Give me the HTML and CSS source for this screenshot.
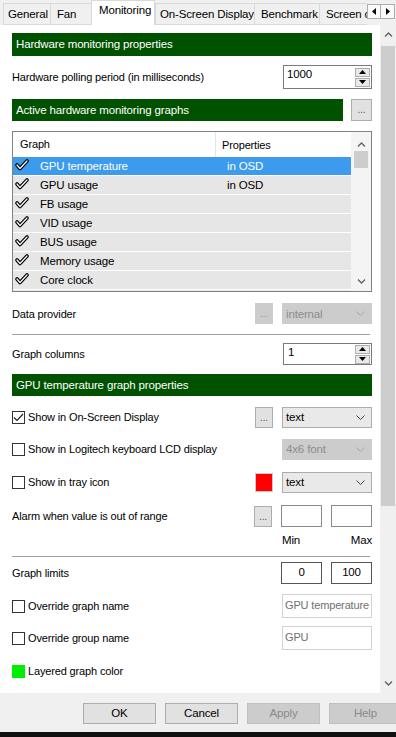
FILE: index.html
```html
<!DOCTYPE html>
<html>
<head>
<meta charset="utf-8">
<link rel="stylesheet" href="styles.css">
</head>
<body>
<div class="tabbar">
  <div class="tablist">
    <div class="tab t-general">General</div>
    <div class="tab t-fan">Fan</div>
    <div class="tab sel t-mon">Monitoring</div>
    <div class="tab t-osd">On-Screen Display</div>
    <div class="tab t-bench">Benchmark</div>
    <div class="tab t-screen">Screen capture</div>
  </div>
  <div class="tabarrows">
    <div class="tarrow"><svg width="5" height="7" viewBox="0 0 5 7"><path d="M4 0 L0 3.5 L4 7Z" fill="#000"/></svg></div>
    <div class="tarrow"><svg width="5" height="7" viewBox="0 0 5 7"><path d="M1 0 L5 3.5 L1 7Z" fill="#000"/></svg></div>
  </div>
</div>

<div class="main">
  <div class="panel">
    <div class="content">
      <div class="gbar g1">Hardware monitoring properties</div>

      <div class="row r-poll">
        <span>Hardware polling period (in milliseconds)</span>
        <div class="spin h24">
          <div class="spin-val">1000</div>
          <div class="spin-btns">
            <div class="sb"><svg width="7" height="4" viewBox="0 0 7 4"><path d="M0 4 L3.5 0 L7 4Z" fill="#000"/></svg></div>
            <div class="sb"><svg width="7" height="4" viewBox="0 0 7 4"><path d="M0 0 L3.5 4 L7 0Z" fill="#000"/></svg></div>
          </div>
        </div>
      </div>

      <div class="row r-active">
        <div class="gbar g2">Active hardware monitoring graphs</div>
        <div class="dots">...</div>
      </div>

      <div class="list">
        <div class="lv">
          <div class="lv-head">
            <div class="c1">Graph</div>
            <div class="c2">Properties</div>
          </div>
          <div class="lv-row selrow"><span class="chk"><svg width="14" height="12" viewBox="0 0 14 12"><path d="M2 6 L5 9.5 L12 2" fill="none" stroke="#000" stroke-width="3.6" stroke-linecap="round" stroke-linejoin="round"/><path d="M2 6 L5 9.5 L12 2" fill="none" stroke="#fff" stroke-width="1.2" stroke-linecap="round" stroke-linejoin="round"/></svg></span><span class="n">GPU temperature</span><span class="p">in OSD</span></div>
          <div class="lv-row"><span class="chk"><svg width="14" height="12" viewBox="0 0 14 12"><path d="M2 6 L5 9.5 L12 2" fill="none" stroke="#000" stroke-width="3.6" stroke-linecap="round" stroke-linejoin="round"/><path d="M2 6 L5 9.5 L12 2" fill="none" stroke="#fff" stroke-width="1.2" stroke-linecap="round" stroke-linejoin="round"/></svg></span><span class="n">GPU usage</span><span class="p">in OSD</span></div>
          <div class="lv-row"><span class="chk"><svg width="14" height="12" viewBox="0 0 14 12"><path d="M2 6 L5 9.5 L12 2" fill="none" stroke="#000" stroke-width="3.6" stroke-linecap="round" stroke-linejoin="round"/><path d="M2 6 L5 9.5 L12 2" fill="none" stroke="#fff" stroke-width="1.2" stroke-linecap="round" stroke-linejoin="round"/></svg></span><span class="n">FB usage</span><span class="p"></span></div>
          <div class="lv-row"><span class="chk"><svg width="14" height="12" viewBox="0 0 14 12"><path d="M2 6 L5 9.5 L12 2" fill="none" stroke="#000" stroke-width="3.6" stroke-linecap="round" stroke-linejoin="round"/><path d="M2 6 L5 9.5 L12 2" fill="none" stroke="#fff" stroke-width="1.2" stroke-linecap="round" stroke-linejoin="round"/></svg></span><span class="n">VID usage</span><span class="p"></span></div>
          <div class="lv-row"><span class="chk"><svg width="14" height="12" viewBox="0 0 14 12"><path d="M2 6 L5 9.5 L12 2" fill="none" stroke="#000" stroke-width="3.6" stroke-linecap="round" stroke-linejoin="round"/><path d="M2 6 L5 9.5 L12 2" fill="none" stroke="#fff" stroke-width="1.2" stroke-linecap="round" stroke-linejoin="round"/></svg></span><span class="n">BUS usage</span><span class="p"></span></div>
          <div class="lv-row"><span class="chk"><svg width="14" height="12" viewBox="0 0 14 12"><path d="M2 6 L5 9.5 L12 2" fill="none" stroke="#000" stroke-width="3.6" stroke-linecap="round" stroke-linejoin="round"/><path d="M2 6 L5 9.5 L12 2" fill="none" stroke="#fff" stroke-width="1.2" stroke-linecap="round" stroke-linejoin="round"/></svg></span><span class="n">Memory usage</span><span class="p"></span></div>
          <div class="lv-row"><span class="chk"><svg width="14" height="12" viewBox="0 0 14 12"><path d="M2 6 L5 9.5 L12 2" fill="none" stroke="#000" stroke-width="3.6" stroke-linecap="round" stroke-linejoin="round"/><path d="M2 6 L5 9.5 L12 2" fill="none" stroke="#fff" stroke-width="1.2" stroke-linecap="round" stroke-linejoin="round"/></svg></span><span class="n">Core clock</span><span class="p"></span></div>
          <div class="lv-row"><span class="chk"><svg width="14" height="12" viewBox="0 0 14 12"><path d="M2 6 L5 9.5 L12 2" fill="none" stroke="#000" stroke-width="3.6" stroke-linecap="round" stroke-linejoin="round"/><path d="M2 6 L5 9.5 L12 2" fill="none" stroke="#fff" stroke-width="1.2" stroke-linecap="round" stroke-linejoin="round"/></svg></span><span class="n"></span><span class="p"></span></div>
        </div>
        <div class="lv-scroll">
          <svg class="chev" width="9" height="5" viewBox="0 0 9 5"><path d="M1 4.5 L4.5 1 L8 4.5" fill="none" stroke="#606060" stroke-width="1.3"/></svg>
          <div class="lv-thumb"></div>
          <div class="fill"></div>
          <svg class="chev" width="9" height="5" viewBox="0 0 9 5"><path d="M1 0.5 L4.5 4 L8 0.5" fill="none" stroke="#606060" stroke-width="1.3"/></svg>
        </div>
      </div>

      <div class="row r-provider">
        <span>Data provider</span>
        <div class="ctrls">
          <div class="dots dis">...</div>
          <div class="combo dis"><span>internal</span><svg width="9" height="5" viewBox="0 0 9 5"><path d="M0.5 0.5 L4.5 4.5 L8.5 0.5" fill="none" stroke="#a8a8a8" stroke-width="1"/></svg></div>
        </div>
      </div>

      <div class="sep s1"></div>

      <div class="row r-cols">
        <span>Graph columns</span>
        <div class="spin h22">
          <div class="spin-val v1">1</div>
          <div class="spin-btns">
            <div class="sb"><svg width="7" height="4" viewBox="0 0 7 4"><path d="M0 4 L3.5 0 L7 4Z" fill="#000"/></svg></div>
            <div class="sb"><svg width="7" height="4" viewBox="0 0 7 4"><path d="M0 0 L3.5 4 L7 0Z" fill="#000"/></svg></div>
          </div>
        </div>
      </div>

      <div class="gbar g3">GPU temperature graph properties</div>

      <div class="row r-osd">
        <label class="cb"><span class="box on"><svg width="11" height="9" viewBox="0 0 11 9"><path d="M1 4.5 L4 7.5 L10 1" fill="none" stroke="#222" stroke-width="1.2"/></svg></span>Show in On-Screen Display</label>
        <div class="ctrls">
          <div class="dots">...</div>
          <div class="combo"><span>text</span><svg width="9" height="5" viewBox="0 0 9 5"><path d="M0.5 0.5 L4.5 4.5 L8.5 0.5" fill="none" stroke="#444" stroke-width="1"/></svg></div>
        </div>
      </div>

      <div class="row r-lcd">
        <label class="cb"><span class="box"></span>Show in Logitech keyboard LCD display</label>
        <div class="ctrls">
          <div class="combo dis"><span>4x6 font</span><svg width="9" height="5" viewBox="0 0 9 5"><path d="M0.5 0.5 L4.5 4.5 L8.5 0.5" fill="none" stroke="#a8a8a8" stroke-width="1"/></svg></div>
        </div>
      </div>

      <div class="row r-tray">
        <label class="cb"><span class="box"></span>Show in tray icon</label>
        <div class="ctrls">
          <div class="swatch red"></div>
          <div class="combo"><span>text</span><svg width="9" height="5" viewBox="0 0 9 5"><path d="M0.5 0.5 L4.5 4.5 L8.5 0.5" fill="none" stroke="#444" stroke-width="1"/></svg></div>
        </div>
      </div>

      <div class="row r-alarm">
        <span>Alarm when value is out of range</span>
        <div class="ctrls">
          <div class="dots">...</div>
          <div class="pair">
            <div class="tbox"></div>
            <div class="tbox"></div>
          </div>
        </div>
      </div>
      <div class="minmax"><span>Min</span><span>Max</span></div>

      <div class="sep s2"></div>

      <div class="row r-limits">
        <span>Graph limits</span>
        <div class="pair">
          <div class="tbox dark">0</div>
          <div class="tbox dark">100</div>
        </div>
      </div>

      <div class="row r-gname">
        <label class="cb"><span class="box"></span>Override graph name</label>
        <div class="dinput">GPU temperature</div>
      </div>

      <div class="row r-grp">
        <label class="cb"><span class="box"></span>Override group name</label>
        <div class="dinput">GPU</div>
      </div>

      <div class="row r-layer">
        <label class="cb"><span class="swatch green"></span>Layered graph color</label>
      </div>

      <div class="row r-next">
        <div class="dinput"></div>
      </div>
    </div>
  </div>
  <div class="vscroll">
    <svg class="chev" width="9" height="5" viewBox="0 0 9 5"><path d="M1 4.5 L4.5 1 L8 4.5" fill="none" stroke="#606060" stroke-width="1.3"/></svg>
    <div class="thumb"></div>
    <div class="fill"></div>
    <svg class="chev" width="9" height="5" viewBox="0 0 9 5"><path d="M1 0.5 L4.5 4 L8 0.5" fill="none" stroke="#606060" stroke-width="1.3"/></svg>
  </div>
</div>

<div class="footer">
  <div class="btn">OK</div>
  <div class="btn">Cancel</div>
  <div class="btn dis">Apply</div>
  <div class="btn dis">Help</div>
</div>
<div class="taskbar"></div>
</body>
</html>
```

FILE: styles.css
```css
* { box-sizing: border-box; }
html, body { margin: 0; padding: 0; }
body {
  width: 396px;
  height: 737px;
  overflow: hidden;
  background: #f0f0f0;
  font-family: "Liberation Sans", Arial, sans-serif;
  font-size: 11px;
  letter-spacing: -0.15px;
  color: #000;
}

/* tabs */
.tabbar {
  height: 25px;
  display: flex;
  align-items: flex-start;
}
.tablist {
  width: 367px;
  height: 25px;
  display: flex;
  align-items: flex-end;
  overflow: hidden;
  padding-left: 3px;
  flex: none;
}
.tab {
  flex: none;
  height: 22px;
  border: 1px solid #d9d9d9;
  border-right: none;
  background: #f0f0f0;
  padding: 4px 0 0 4px;
  white-space: nowrap;
  font-size: 11.5px;
}
.tab.sel {
  height: 25px;
  background: #fff;
  border: 1px solid #d9d9d9;
  border-bottom: none;
  padding-top: 3px;
  padding-left: 7px;
}
.t-general { width: 47px; }
.t-fan { width: 41px; padding-left: 6px; }
.t-mon { width: 64px; }
.t-osd { width: 99px; }
.t-bench { width: 65px; padding-left: 6px; }
.t-screen { width: 90px; padding-left: 6px; }
.tabarrows {
  display: flex;
  margin-top: 4px;
}
.tarrow {
  width: 14px;
  height: 15px;
  border: 1px solid #adadad;
  background: #fafafa;
  display: flex;
  align-items: center;
  justify-content: center;
}
.tarrow + .tarrow { border-left: none; }

/* main */
.main {
  height: 668px;
  display: flex;
}
.panel {
  width: 380px;
  background: #fff;
  overflow: hidden;
}
.content {
  padding: 8px 8px 0 12px;
}
.vscroll {
  width: 16px;
  background: #f0f0f0;
  display: flex;
  flex-direction: column;
  align-items: center;
  padding-top: 7px;
}
.vscroll .thumb {
  margin-top: 9px;
  width: 14px;
  height: 460px;
  background: #cdcdcd;
}
.vscroll .fill { flex: 1; }
.vscroll .chev:last-child { margin-bottom: 7px; }

.gbar {
  background: #005200;
  color: #fff;
  height: 23px;
  line-height: 22px;
  padding-left: 4px;
  font-size: 11.5px;
}
.g3 { margin-top: 9px; height: 22px; }

.row {
  display: flex;
  align-items: center;
  justify-content: space-between;
}
.ctrls {
  display: flex;
  align-items: center;
  gap: 9px;
  margin-left: auto;
}

.r-poll { margin-top: 9px; height: 24px; }
.r-active { margin-top: 10px; height: 22px; }
.r-active .gbar { width: 331px; height: 22px; }

.dots {
  width: 18px;
  height: 21px;
  border: 1px solid #adadad;
  background: #e1e1e1;
  color: #555;
  font-size: 10px;
  text-align: center;
  line-height: 20px;
}
.r-active .dots { width: 21px; height: 22px; }
.dots.dis { background: #cccccc; border-color: #cccccc; color: #999; }

.spin {
  width: 89px;
  border: 1px solid #7a7a7a;
  background: #fff;
  display: flex;
  justify-content: space-between;
}
.spin.h24 { height: 24px; }
.spin.h22 { height: 22px; }
.spin-val { padding: 2px 0 0 3px; font-size: 11.5px; }
.spin-val.v1 { padding-left: 4px; }
.spin-btns {
  display: flex;
  flex-direction: column;
  justify-content: center;
  gap: 1px;
  padding-right: 1px;
}
.sb {
  width: 15px;
  height: 9px;
  border: 1px solid #adadad;
  background: #e9e9e9;
  display: flex;
  align-items: center;
  justify-content: center;
}

/* list */
.list {
  margin-top: 10px;
  height: 161px;
  border: 1px solid #828282;
  display: flex;
  background: #fff;
}
.lv {
  flex: 1;
  overflow: hidden;
}
.lv-head {
  height: 25px;
  display: flex;
  align-items: center;
}
.lv-head .c1 {
  width: 203px;
  padding-left: 7px;
  border-right: 1px solid #e5e5e5;
  height: 25px;
  line-height: 25px;
}
.lv-head .c2 { padding-left: 6px; }
.lv-row {
  height: 19px;
  background: #e6e6e6;
  border-bottom: 1px solid #fff;
  display: flex;
  align-items: center;
  font-size: 11.5px;
}
.lv-row.selrow { background: #3c9bec; color: #fff; }
.lv-row .chk { width: 14px; margin-left: 2px; display: flex; margin-top: -3px; }
.lv-row .n { width: 198px; padding-left: 11px; }
.lv-row .p { padding-left: 0; }
.lv-scroll {
  width: 20px;
  flex: none;
  background: #f4f4f4;
  display: flex;
  flex-direction: column;
  align-items: center;
  padding-top: 10px;
}
.lv-thumb {
  margin-top: 4px;
  width: 14px;
  height: 17px;
  background: #cdcdcd;
}
.lv-scroll .fill { flex: 1; }
.lv-scroll .chev:last-child { margin-bottom: 7px; }

.r-provider { margin-top: 11px; height: 21px; }
.combo {
  width: 90px;
  height: 21px;
  border: 1px solid #adadad;
  background: #e9e9e9;
  display: flex;
  align-items: center;
  justify-content: space-between;
  padding: 0 6px 0 3px;
  font-size: 11.5px;
}
.combo.dis { background: #cccccc; border-color: #cccccc; color: #8c8c8c; }

.sep { height: 1px; background: #a0a0a0; margin-right: 2px; }
.s1 { margin-top: 10px; }
.s2 { margin-top: 6px; }

.r-cols { margin-top: 8px; height: 22px; }

.cb { display: flex; align-items: center; }
.box {
  width: 13px;
  height: 13px;
  border: 1px solid #333;
  background: #fff;
  margin-right: 3px;
  display: flex;
  align-items: center;
  justify-content: center;
}

.r-osd { margin-top: 11px; height: 20px; }
.r-lcd { margin-top: 12px; height: 20px; }
.r-tray { margin-top: 13px; height: 20px; }
.r-alarm { margin-top: 13px; height: 22px; }

.swatch.red {
  width: 18px;
  height: 19px;
  background: #ff0000;
  border: 1px solid #c8c8c8;
}
.swatch.green {
  width: 13px;
  height: 13px;
  background: #00ee00;
  margin-right: 3px;
}

.pair { display: flex; gap: 9px; }
.tbox {
  width: 41px;
  height: 22px;
  border: 1px solid #8a8a8a;
  background: #fff;
  text-align: center;
  line-height: 19px;
  font-size: 11.5px;
}
.tbox.dark { border-color: #555; }

.minmax {
  display: flex;
  justify-content: space-between;
  width: 90px;
  margin-left: auto;
  height: 20px;
  line-height: 20px;
  margin-top: 3px;
  font-size: 11.5px;
}

.r-limits { margin-top: 5px; height: 22px; }
.r-gname { margin-top: 10px; height: 24px; }
.r-grp { margin-top: 8px; height: 24px; }
.r-layer { margin-top: 12px; height: 18px; }
.r-next { margin-top: 13px; height: 24px; justify-content: flex-end; }

.dinput {
  width: 90px;
  height: 24px;
  border: 1px solid #d2d2d2;
  color: #707070;
  padding: 4px 0 0 2px;
  white-space: nowrap;
  overflow: hidden;
  font-size: 11px;
}

/* footer */
.footer {
  height: 39px;
  display: flex;
  padding: 10px 0 0 83px;
  gap: 9px;
}
.btn {
  flex: none;
  width: 73px;
  height: 21px;
  border: 1px solid #adadad;
  background: #e1e1e1;
  text-align: center;
  line-height: 19px;
  font-size: 11.5px;
}
.btn.dis { background: #cccccc; border-color: #bfbfbf; color: #8a8a8a; }
.taskbar { height: 5px; background: #101010; }
```
